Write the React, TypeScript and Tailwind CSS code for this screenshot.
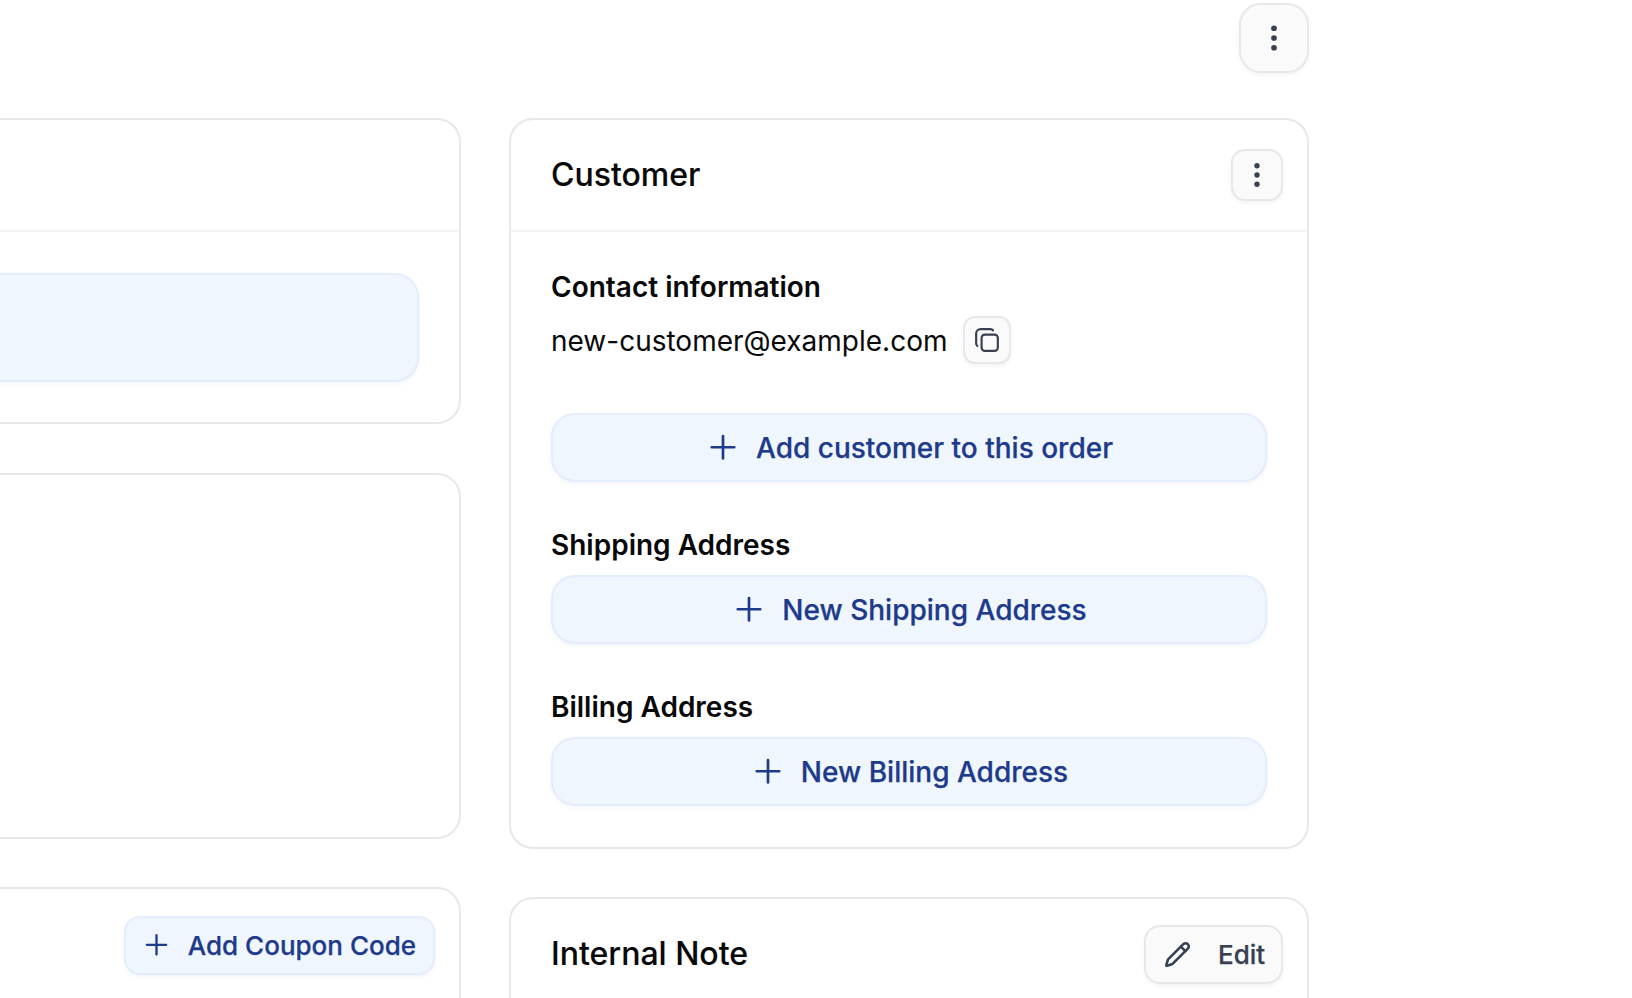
import { Pencil } from "lucide-react";

const inter = "font-['Inter',sans-serif]";

function PlusIcon({ size = "w-[36px] h-[36px]" }: { size?: string }) {
  return (
    <svg viewBox="0 0 24 24" fill="none" stroke="currentColor" strokeWidth={1.8} strokeLinecap="round" className={size}>
      <path d="M12 4v15m7.500-7.500h-15" />
    </svg>
  );
}

function Dots({ size = "w-[36px] h-[36px]" }: { size?: string }) {
  return (
    <svg viewBox="0 0 24 24" fill="#374151" className={size}>
      <circle cx="12" cy="5.500" r="1.900" />
      <circle cx="12" cy="12" r="1.900" />
      <circle cx="12" cy="18.500" r="1.900" />
    </svg>
  );
}

function CopyIcon() {
  return (
    <svg viewBox="0 0 24 24" fill="none" stroke="#374151" strokeWidth={2} strokeLinecap="round" strokeLinejoin="round" className="w-[26px] h-[26px]">
      <rect x="7" y="7" width="15" height="15" rx="3" />
      <path d="M3 17.500c-.7-.5-1-1.300-1-2.500V6a4 4 0 0 1 4-4h9c1.200 0 2 .3 2.500 1" />
    </svg>
  );
}

function BlueButton({ children }: { children: string }) {
  return (
    <button className="flex h-[69px] w-full items-center justify-center gap-[15px] rounded-[24px] border-2 border-[#e3edfd] bg-[#f0f6fe] text-[28px] font-medium text-[#1e3a8a] shadow-[0_2px_4px_rgba(30,58,138,0.05)] [-webkit-text-stroke:0.25px_#1e3a8a]">
      <PlusIcon />
      {children}
    </button>
  );
}

function Label({ children }: { children: string }) {
  return <h4 className="text-[28px] leading-[40px] font-semibold text-[#09090b]">{children}</h4>;
}

export default function App() {
  return (
    <div className={`${inter} h-[998px] w-[1632px] overflow-hidden bg-white`}>
      <div className="flex h-[118px] items-start justify-end pt-[3px] pr-[323px]">
        <button className="flex h-[70px] w-[70px] items-center justify-center rounded-[22px] border-2 border-[#e7e7ec] bg-[#fafafb] shadow-[0_2px_4px_rgba(0,0,0,0.05)]">
          <Dots />
        </button>
      </div>

      <div className="flex items-start gap-[48px]">
        <div className="ml-[-40px] flex w-[501px] shrink-0 flex-col">
          <section className="h-[306px] rounded-[24px] border-2 border-[#e7e7ec] bg-white">
            <div className="h-[112px] border-b-2 border-[#f3f3f6]" />
            <div className="pt-[41px] pr-[40px]">
              <div className="h-[109px] rounded-[24px] border-2 border-[#e3edfd] bg-[#f0f6fe] shadow-[0_2px_4px_rgba(30,58,138,0.05)]" />
            </div>
          </section>
          <section className="mt-[49px] h-[366px] rounded-[24px] border-2 border-[#e7e7ec] bg-white" />
          <section className="mt-[48px] h-[200px] rounded-[24px] border-2 border-[#e7e7ec] bg-white">
            <div className="flex justify-end pt-[27px] pr-[24px]">
              <button className="flex h-[59px] items-center gap-[16px] rounded-[16px] border-2 border-[#e3edfd] bg-[#f0f6fe] pr-[17px] pl-[15px] text-[26px] font-medium text-[#1e3a8a] shadow-[0_2px_4px_rgba(30,58,138,0.05)] [-webkit-text-stroke:0.25px_#1e3a8a]">
                <PlusIcon size="w-[31px] h-[31px]" />
                Add Coupon Code
              </button>
            </div>
          </section>
        </div>

        <div className="flex w-[800px] shrink-0 flex-col gap-[48px]">
          <section className="h-[731px] rounded-[24px] border-2 border-[#e7e7ec] bg-white">
            <div className="flex h-[112px] items-center justify-between border-b-2 border-[#f3f3f6] pr-[24px] pl-[40px]">
              <h3 className="text-[32px] font-medium text-[#09090b] [-webkit-text-stroke:0.12px_#09090b]">Customer</h3>
              <button className="flex h-[52px] w-[52px] items-center justify-center rounded-[14px] border-2 border-[#e7e7ec] bg-[#fafafb] shadow-[0_2px_4px_rgba(0,0,0,0.05)]">
                <Dots size="w-[34px] h-[34px]" />
              </button>
            </div>
            <div className="flex flex-col px-[40px] pt-[35px]">
              <Label>Contact information</Label>
              <div className="mt-[9px] flex items-center gap-[16px]">
                <span className="pt-[1px] text-[28px] text-[#09090b]">new-customer@example.com</span>
                <button className="flex h-[48px] w-[48px] items-center justify-center rounded-[12px] border-2 border-[#e7e7ec] bg-[#fafafb] shadow-[0_2px_4px_rgba(0,0,0,0.05)]">
                  <CopyIcon />
                </button>
              </div>
              <div className="mt-[49px]">
                <BlueButton>Add customer to this order</BlueButton>
              </div>
              <div className="mt-[43px]">
                <Label>Shipping Address</Label>
              </div>
              <div className="mt-[10px]">
                <BlueButton>New Shipping Address</BlueButton>
              </div>
              <div className="mt-[43px]">
                <Label>Billing Address</Label>
              </div>
              <div className="mt-[10px]">
                <BlueButton>New Billing Address</BlueButton>
              </div>
            </div>
          </section>
          <section className="h-[200px] rounded-[24px] border-2 border-[#e7e7ec] bg-white">
            <div className="flex items-center justify-between pt-[26px] pr-[24px] pl-[40px]">
              <h3 className="pb-[1px] text-[32px] font-medium text-[#09090b] [-webkit-text-stroke:0.12px_#09090b]">Internal Note</h3>
              <button className="flex h-[59px] w-[139px] items-center gap-[27px] rounded-[16px] border-2 border-[#e7e7ec] bg-[#fafafb] pl-[18px] text-[26px] font-medium text-[#374151] shadow-[0_2px_4px_rgba(0,0,0,0.05)] [-webkit-text-stroke:0.25px_#374151]">
                <Pencil className="h-[27px] w-[27px]" strokeWidth={2.300} />
                Edit
              </button>
            </div>
          </section>
        </div>
      </div>
    </div>
  );
}
